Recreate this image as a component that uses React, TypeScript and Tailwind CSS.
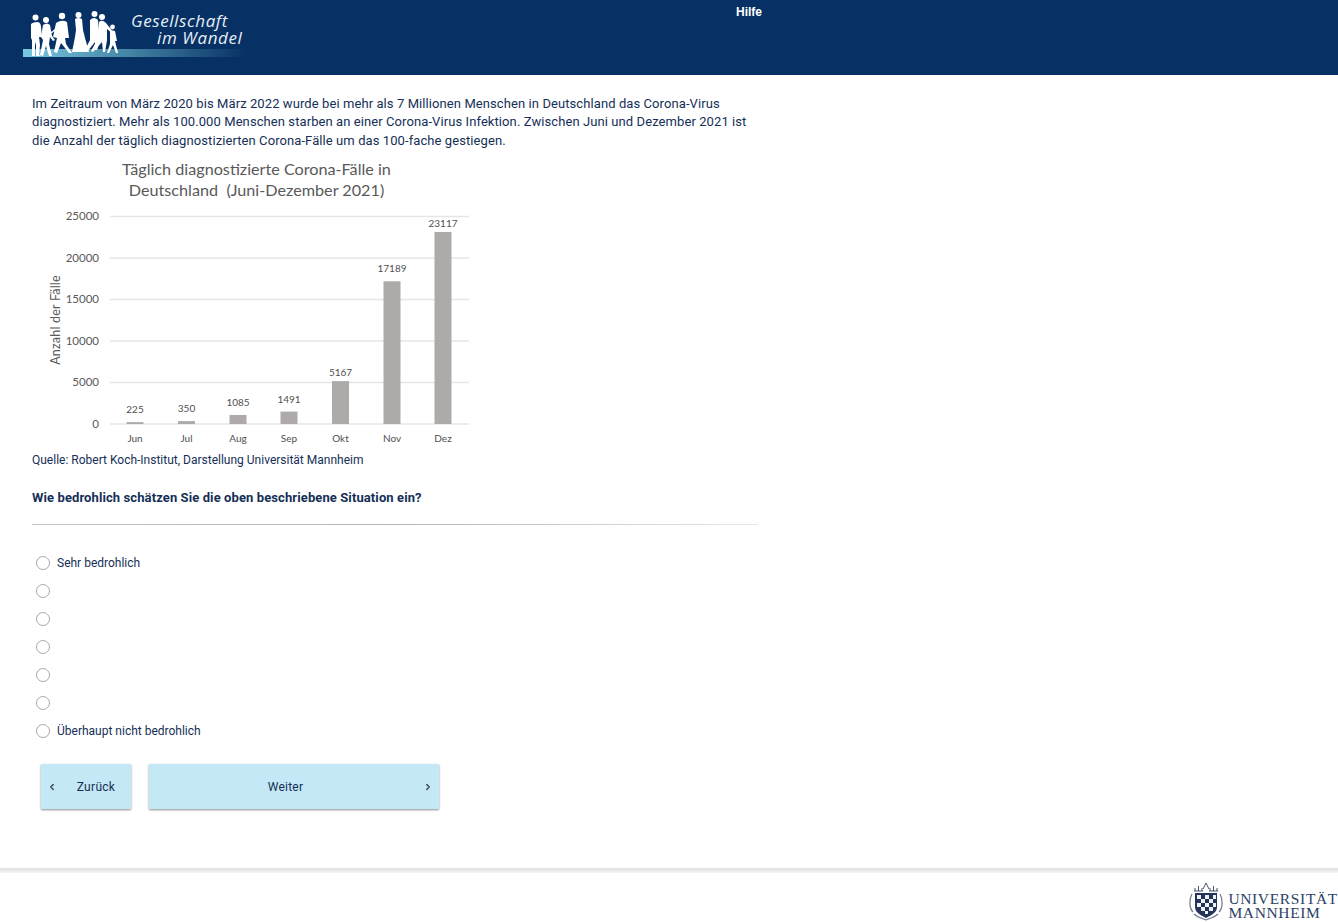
import { ChevronLeft, ChevronRight } from 'lucide-react'

const bars = [
  { month: 'Jun', value: 225, x: 135, labelY: 413 },
  { month: 'Jul', value: 350, x: 186.5, labelY: 412 },
  { month: 'Aug', value: 1085, x: 238, labelY: 406 },
  { month: 'Sep', value: 1491, x: 289, labelY: 403 },
  { month: 'Okt', value: 5167, x: 340.5, labelY: 376 },
  { month: 'Nov', value: 17189, x: 392, labelY: 272 },
  { month: 'Dez', value: 23117, x: 443, labelY: 227 },
]

const ticks = [25000, 20000, 15000, 10000, 5000, 0]

// chart coordinates are page coordinates, shifted by the viewBox
function CasesChart() {
  const baseY = 424
  const scale = 207.6 / 25000
  return (
    <svg viewBox="32 155 440 297" className="block h-[297px] w-[440px]" style={{ fontFamily: 'Lato, sans-serif' }}>
      <g fill="#595959" fontSize="16.2" textAnchor="middle">
        <text x="256.500" y="175">Täglich diagnostizierte Corona-Fälle in</text>
        <text x="256.500" y="196">Deutschland {'\u00a0'}(Juni-Dezember 2021)</text>
      </g>
      {ticks.map((t) => {
        const y = baseY - t * scale
        return (
          <g key={t}>
            <line x1="110" x2="469" y1={y} y2={y} stroke="#e6e6e6" strokeWidth="1.5" />
            <text x="99" y={y + 4} fontSize="11.5" fill="#595959" textAnchor="end">{t}</text>
          </g>
        )
      })}
      <text transform="translate(60 320) rotate(-90)" fontSize="12.500" letterSpacing="0.2" fill="#595959" textAnchor="middle">Anzahl der Fälle</text>
      {bars.map((b) => {
        const h = b.value * scale
        return (
          <g key={b.month} textAnchor="middle" fill="#505050" fontSize="10">
            <rect x={b.x - 8.5} y={baseY - h} width="17" height={h} fill="#aeaaaa" />
            <text x={b.x} y={b.labelY}>{b.value}</text>
            <text x={b.x} y="442">{b.month}</text>
          </g>
        )
      })}
    </svg>
  )
}

function HeaderLogo() {
  return (
    <div className="relative h-[62px] w-[225px] shrink-0">
      {/* viewBox uses page coordinates of the logo */}
      <svg viewBox="23 5 225 62" className="absolute inset-0 h-full w-full">
        <defs>
          <linearGradient id="logoBand" x1="0" x2="1" y1="0" y2="0">
            <stop offset="0" stopColor="#79c8e0" />
            <stop offset="0.42" stopColor="#4a8cab" />
            <stop offset="1" stopColor="#073064" />
          </linearGradient>
        </defs>
        <rect x="23" y="49" width="225" height="8" fill="url(#logoBand)" />
        <g fill="#fff">
          <circle cx="35.500" cy="17.500" r="3" />
          <circle cx="46" cy="20" r="3" />
          <circle cx="62" cy="16" r="3.200" />
          <circle cx="78.500" cy="15" r="3" />
          <circle cx="94.500" cy="14" r="3" />
          <circle cx="102" cy="17" r="3" />
          <circle cx="112.500" cy="27" r="2.400" />
          <path d="M31 24Q33 22 38 22 41 23 41 27L42 37 39 37 40 45 39 55 41 56 36 56 36 45 35 42 35 56 32 56 32 40 31 38Z" />
          <path d="M43 25Q47 22 50 25L52 36 55 40 53 41 50 37 49 44 52 56 49 56 46 46 43 56 40 55 43 40 41 37Z" />
          <path d="M56 23Q62 19 67 22L69 38 65 38 66 44 72 53 69 53 61 43 57 53 54 52 57 38 53 37Z" />
          <path d="M75 19Q78 17 82 19L83 30 85 38 89 52 72 52 75 37 76 30Z" />
          <path d="M90 20Q94 16 98 20L99 35 100 42 97 50 95 50 95 42 87 52 85 50 90 40Z" />
          <path d="M99 22Q102 19 106 23L114 33 113 34 107 29 107 40 105 52 103 52 102 42 93 52 91 51 97 40Z" />
          <path d="M110 31Q113 30 115 31L117 41 115 41 116 45 118 53 116 53 113 45 109 53 107 53 110 44Z" />
        </g>
        <path d="M51 33L56 29" stroke="#fff" strokeWidth="1.500" />
      </svg>
      <div className="absolute left-[108px] top-[7px] text-[17px] leading-[18px] tracking-[0.6px] text-[#e6eef5] italic [font-family:'Open_Sans',sans-serif]">
        Gesellschaft
      </div>
      <div className="absolute left-[134px] top-[24px] text-[17px] leading-[18px] tracking-[0.6px] text-[#e6eef5] italic [font-family:'Open_Sans',sans-serif]">
        im Wandel
      </div>
    </div>
  )
}

function Radio({ label }: { label?: string }) {
  return (
    <label className="flex h-[28px] items-center pl-[36px]">
      <span className="block h-[14px] w-[14px] shrink-0 rounded-full border border-[#a8a8a8] bg-white" />
      {label && <span className="ml-[7px] text-[12px] text-[#152f57]">{label}</span>}
    </label>
  )
}

function UniLogo() {
  return (
    <div className="flex items-start">
      <svg viewBox="0 0 38 40" className="h-[40px] w-[38px] shrink-0">
        <g stroke="#33415f" strokeWidth="0.9" fill="none">
          <path d="M7 10h9M8 7v3M11.500 5v5M15 7v3" />
          <path d="M22 10h9M23 7v3M26.500 5v5M30 7v3" />
          <path d="M16 8l3-6 3 6" />
        </g>
        <path d="M5 13C2 18 2 27 6 31M33 13C36 18 36 27 32 31M7 33C11 37 15 37 19 39 23 37 27 37 31 33" stroke="#6d7890" strokeWidth="1.200" fill="none" />
        <path d="M8 12h22v14c0 5-5 8-11 11C13 34 8 31 8 26Z" fill="#24345a" />
        <path d="M10 14h4v4h-4ZM18 14h4v4h-4ZM26 14h3v4h-3ZM14 18h4v4h-4ZM22 18h4v4h-4ZM10 22h4v4h-4ZM18 22h4v4h-4ZM26 22h3v4h-3ZM14 26h4v4h-4ZM22 26h4v4h-4ZM18 30h3v3h-3Z" fill="#eef1f6" />
      </svg>
      <div className="ml-[3px] mt-[11px] text-[#2b3f66] [font-family:'Liberation_Serif',serif]">
        <div className="text-[15.5px] leading-[14px] tracking-[0.65px] whitespace-nowrap">UNIVERSITÄT</div>
        <div className="text-[15.5px] leading-[14px] tracking-[0.65px] whitespace-nowrap">MANNHEIM</div>
      </div>
    </div>
  )
}

export default function App() {
  return (
    <div className="flex h-[922px] flex-col overflow-hidden bg-white text-[#152f57] [font-family:Roboto,sans-serif]">
      <header className="flex h-[75px] shrink-0 bg-[#073064] pl-[23px] pt-[5px]">
        <HeaderLogo />
        <a className="ml-[488px] mt-0 text-[12px] leading-[14px] font-bold text-white [font-family:'Liberation_Sans',sans-serif]">Hilfe</a>
      </header>

      <main className="flex-1">
        <div className="ml-[32px] w-[726px] pt-[20px]">
          <p className="text-[13px] leading-[18.4px] tracking-[0.085px]">
            Im Zeitraum von März 2020 bis März 2022 wurde bei mehr als 7 Millionen Menschen in Deutschland das Corona-Virus
            diagnostiziert. Mehr als 100.000 Menschen starben an einer Corona-Virus Infektion. Zwischen Juni und Dezember 2021 ist
            die Anzahl der täglich diagnostizierten Corona-Fälle um das 100-fache gestiegen.
          </p>
          <div className="mt-[4.3px]">
            <CasesChart />
          </div>
          <p className="text-[12px] leading-[16px]">Quelle: Robert Koch-Institut, Darstellung Universität Mannheim</p>
          <p className="mt-[22px] text-[13px] leading-[16px] font-bold tracking-[0.1px]">Wie bedrohlich schätzen Sie die oben beschriebene Situation ein?</p>
          <div className="mt-[18px] h-px bg-gradient-to-r from-[#c4c4c4] via-[#b4b4b4] to-[#e8e8e8]" />
        </div>

        <div className="mt-[24px]">
          <Radio label="Sehr bedrohlich" />
          <Radio />
          <Radio />
          <Radio />
          <Radio />
          <Radio />
          <Radio label="Überhaupt nicht bedrohlich" />
        </div>

        <div className="ml-[41px] mt-[19px] flex gap-[18px]">
          <button className="relative flex h-[45px] w-[90px] items-center justify-center bg-[#c4e8f5] pl-[20px] pt-[2px] text-[12px] tracking-[0.3px] text-[#152f57] shadow-[0_1px_2px_rgba(0,0,0,0.45)]">
            <ChevronLeft size={10} strokeWidth={3.5} className="absolute left-[6px] top-[18px] text-[#3b4a5e]" />
            Zurück
          </button>
          <button className="relative flex h-[45px] w-[290px] items-center justify-center bg-[#c4e8f5] pr-[17px] pt-[2px] text-[12px] tracking-[0.25px] text-[#152f57] shadow-[0_1px_2px_rgba(0,0,0,0.45)]">
            Weiter
            <ChevronRight size={10} strokeWidth={3.5} className="absolute right-[6px] top-[18px] text-[#3b4a5e]" />
          </button>
        </div>
      </main>

      <footer className="h-[54px] shrink-0">
        <div className="h-[5px] bg-gradient-to-b from-[#e2e2e2] via-[#e8e8e8] to-[#f8f8f8]" />
        <div className="flex justify-end pt-[8px]">
          <UniLogo />
        </div>
      </footer>
    </div>
  )
}
